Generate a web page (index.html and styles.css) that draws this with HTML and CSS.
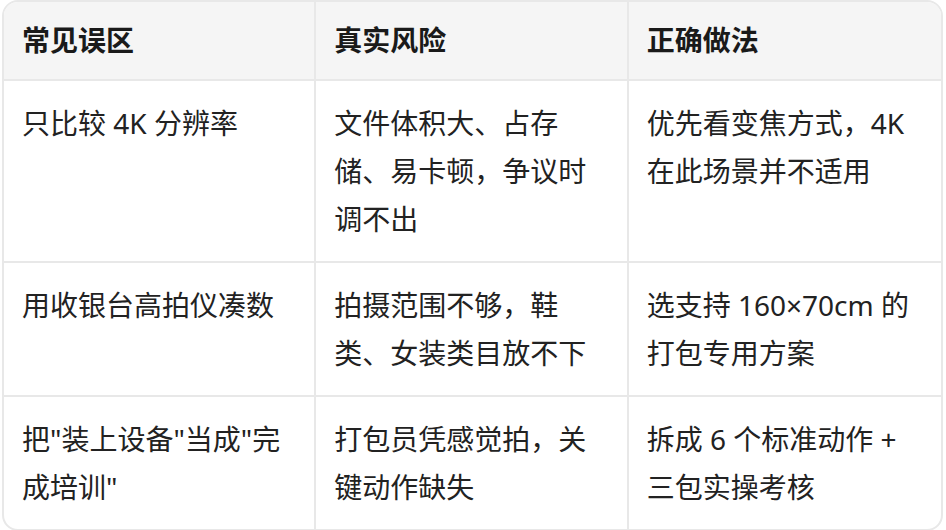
FILE: index.html
```html
<!DOCTYPE html>
<html lang="zh-CN">
<head>
<meta charset="utf-8">
<link rel="stylesheet" href="styles.css">
</head>
<body>
<div class="wrap">
  <table class="tbl">
    <colgroup><col class="c1"><col class="c2"><col class="c3"></colgroup>
    <thead>
      <tr><th>常见误区</th><th>真实风险</th><th>正确做法</th></tr>
    </thead>
    <tbody>
      <tr><td>只比较 4K 分辨率</td><td>文件体积大、占存储、易卡顿，争议时调不出</td><td>优先看变焦方式，4K 在此场景并不适用</td></tr>
      <tr><td>用收银台高拍仪凑数</td><td>拍摄范围不够，鞋类、女装类目放不下</td><td>选支持 160×70cm 的打包专用方案</td></tr>
      <tr><td>把"装上设备"当成"完成培训"</td><td>打包员凭感觉拍，关键动作缺失</td><td>拆成 6 个标准动作 + 三包实操考核</td></tr>
    </tbody>
  </table>
</div>
</body>
</html>
```
FILE: styles.css
```css
html, body {
  margin: 0;
  padding: 0;
  background: #ffffff;
}
.wrap {
  margin: 0 3px 0 2px;
  border: 2px solid #e8e8e8;
  border-radius: 16px;
  overflow: hidden;
  font-family: "Noto Sans", "Noto Sans CJK SC", sans-serif;
  font-size: 28px;
  line-height: 48px;
  color: #222222;
}
.tbl {
  width: 100%;
  border-collapse: separate;
  border-spacing: 0;
  table-layout: fixed;
}
.tbl col { width: 33.33%; }
.tbl th, .tbl td {
  text-align: left;
  vertical-align: top;
  border-right: 2px solid #e8e8e8;
  border-bottom: 2px solid #e8e8e8;
}
.tbl th:last-child, .tbl td:last-child { border-right: none; }
.tbl tbody tr:last-child td { border-bottom: none; }
.tbl th {
  background: #f5f5f5;
  font-weight: 700;
  color: #1a1a1a;
  padding: 14px 18px 15px;
}
.tbl td {
  padding: 18px 18px;
}
```
